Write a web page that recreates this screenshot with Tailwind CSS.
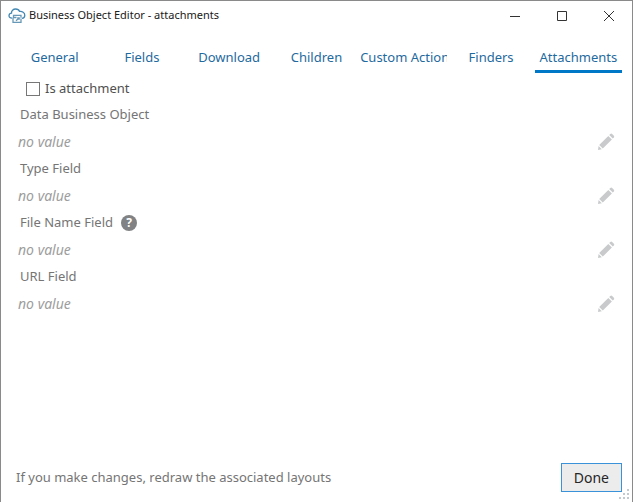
<!DOCTYPE html>
<html lang="en">

<head>
  <meta charset="UTF-8">
  <meta name="viewport" content="width=device-width, initial-scale=1.0">
  <title>Business Object Editor - attachments</title>
  <script src="https://cdn.jsdelivr.net/npm/@tailwindcss/browser@4"></script>
</head>

<body class="bg-white font-['Noto_Sans',sans-serif] text-[13px] text-[#757575]">

  <!-- Pencil icon shared by the field rows -->
  <svg class="hidden" xmlns="http://www.w3.org/2000/svg">
    <symbol id="pencil" viewBox="0 0 18 18">
      <path d="M11.3 2.9 14.9 6.5 5.8 15.6 2.2 12ZM12.2 2 13.3 .9Q14.2.2 15.1.9L16.9 2.7Q17.6 3.6 16.9 4.5L15.8 5.6ZM1.6 13 4.8 16.2 1 17Z" />
    </symbol>
  </svg>

  <div class="min-h-screen flex flex-col border border-[#8a8a8a] border-b-0">
    <!-- Title bar -->
    <header class="flex items-center h-[29px] pl-[7px]">
      <svg class="w-[18px] h-4 shrink-0" viewBox="0 0 18 16" fill="none" stroke="#4388b3" stroke-width="1.3">
        <path d="M4 10.200C2.200 10.200 1 9.300 1 7.800 1 6.500 2 5.400 3.500 5.200 3.300 2.700 5.200 1 7.600 1c2 0 3.400.9 4 2.400C14.100 3 16.800 4.600 16.800 7.200c0 1.800-1.100 3-2.800 3.200" />
        <path d="M5.500 9.500V7.300h7.500v2.500M5 9.500h3.500M5 9.500v4.800h8V10.500M8 12.700l3-2.700M9.200 9.800h2v2" stroke="#6798b7" />
      </svg>
      <h1 class="ml-[3px] text-[11px] text-[#202020] whitespace-nowrap">Business Object Editor - attachments</h1>
      <div class="ml-auto flex h-full text-[#333]">
        <button type="button" aria-label="Minimize" class="w-[47px] flex items-center justify-center">
          <svg class="size-3" viewBox="0 0 12 12" fill="none" stroke="currentColor"><path d="M1 6.5h10" /></svg>
        </button>
        <button type="button" aria-label="Maximize" class="w-[47px] flex items-center justify-center">
          <svg class="size-3" viewBox="0 0 12 12" fill="none" stroke="currentColor"><path d="M1.500 1.500h9v9h-9z" /></svg>
        </button>
        <button type="button" aria-label="Close" class="w-[47px] flex items-center justify-center">
          <svg class="size-3" viewBox="0 0 12 12" fill="none" stroke="currentColor"><path d="M1 1l10 10M11 1 1 11" /></svg>
        </button>
      </div>
    </header>

    <!-- Tabs -->
    <nav class="grid grid-cols-7 mx-2.5 mt-[11px] h-8 text-center text-[#1f6a9e] whitespace-nowrap">
      <a href="#general" class="overflow-hidden leading-8 border-b-3 border-transparent">General</a>
      <a href="#fields" class="overflow-hidden leading-8 border-b-3 border-transparent">Fields</a>
      <a href="#download" class="overflow-hidden leading-8 border-b-3 border-transparent">Download</a>
      <a href="#children" class="overflow-hidden leading-8 border-b-3 border-transparent">Children</a>
      <a href="#actions" class="overflow-hidden leading-8 border-b-3 border-transparent">Custom Actions</a>
      <a href="#finders" class="overflow-hidden leading-8 border-b-3 border-transparent">Finders</a>
      <a href="#attachments" aria-current="page" class="overflow-hidden leading-8 border-b-3 border-[#0078c8]">Attachments</a>
    </nav>

    <!-- Attachment settings -->
    <main class="flex-1 pt-1 px-4">
      <label class="flex items-center h-6 pl-[9px] gap-[5px] text-[#505050]">
        <input type="checkbox" class="appearance-none size-3.5 border border-[#777] bg-white">
        Is attachment
      </label>
      <dl class="leading-[27px]">
        <dt class="pl-[3px]">Data Business Object</dt>
        <dd class="flex items-center justify-between px-px">
          <em class="text-sm leading-[27px] text-[#9d9d9d]">no value</em>
          <button type="button" aria-label="Edit Data Business Object"><svg class="size-[18px] fill-[#c8cacc]"><use href="#pencil" /></svg></button>
        </dd>
        <dt class="pl-[3px]">Type Field</dt>
        <dd class="flex items-center justify-between px-px">
          <em class="text-sm leading-[27px] text-[#9d9d9d]">no value</em>
          <button type="button" aria-label="Edit Type Field"><svg class="size-[18px] fill-[#c8cacc]"><use href="#pencil" /></svg></button>
        </dd>
        <dt class="flex items-center gap-2 pl-[3px]">
          File Name Field
          <button type="button" aria-label="Help" class="size-4 rounded-full bg-[#808284] text-white text-xs leading-4 font-bold">?</button>
        </dt>
        <dd class="flex items-center justify-between px-px">
          <em class="text-sm leading-[27px] text-[#9d9d9d]">no value</em>
          <button type="button" aria-label="Edit File Name Field"><svg class="size-[18px] fill-[#c8cacc]"><use href="#pencil" /></svg></button>
        </dd>
        <dt class="pl-[3px]">URL Field</dt>
        <dd class="flex items-center justify-between px-px">
          <em class="text-sm leading-[27px] text-[#9d9d9d]">no value</em>
          <button type="button" aria-label="Edit URL Field"><svg class="size-[18px] fill-[#c8cacc]"><use href="#pencil" /></svg></button>
        </dd>
      </dl>
    </main>

    <!-- Footer -->
    <footer class="relative flex items-center justify-between pl-[15px] pr-2.5 pb-2.5">
      <p>If you make changes, redraw the associated layouts</p>
      <button type="button" class="h-[29px] px-3 border border-[#3a93d8] bg-[#ececec] text-sm text-[#262626]">Done</button>
      <svg class="absolute right-0.5 bottom-0.5 size-3 fill-[#c3c9d1]" viewBox="0 0 12 12">
        <path d="M9 1h2v2H9zM9 5h2v2H9zM9 9h2v2H9zM5 5h2v2H5zM5 9h2v2H5zM1 9h2v2H1z" />
      </svg>
    </footer>
  </div>
</body>

</html>
